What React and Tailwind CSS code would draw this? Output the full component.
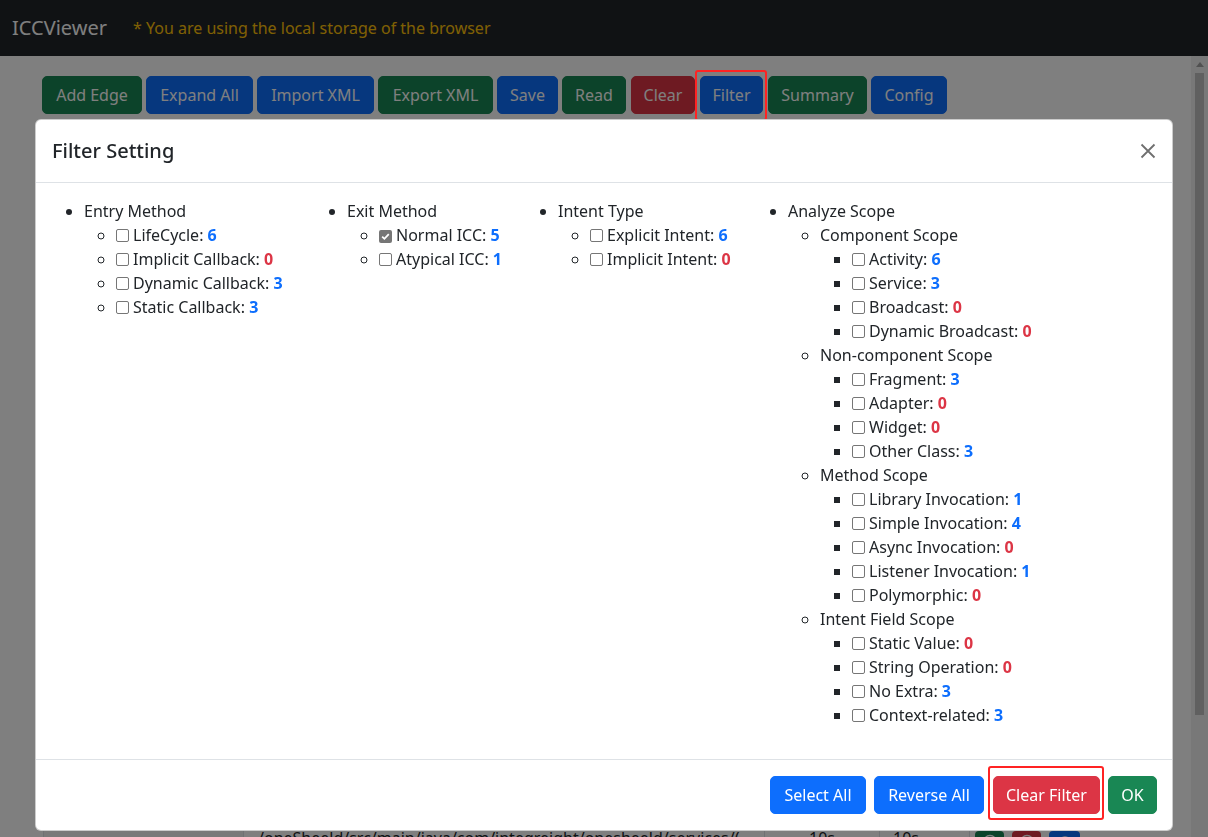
import React from 'react';

const TOOLBAR = [
  { label: 'Add Edge', tone: 'green', w: 'w-[100px]' },
  { label: 'Expand All', tone: 'blue', w: 'w-[107px]' },
  { label: 'Import XML', tone: 'blue', w: 'w-[117px]' },
  { label: 'Export XML', tone: 'green', w: 'w-[115px]' },
  { label: 'Save', tone: 'blue', w: 'w-[61px]' },
  { label: 'Read', tone: 'green', w: 'w-[64px]' },
  { label: 'Clear', tone: 'red', w: 'w-[64px] ml-px' },
  { label: 'Filter', tone: 'blue', w: 'w-[63px] ml-px', marked: true },
  { label: 'Summary', tone: 'green', w: 'w-[99px] ml-px' },
  { label: 'Config', tone: 'blue', w: 'w-[76px]' },
];

const TONE = {
  green: 'bg-[#198754] border-[#198754]',
  blue: 'bg-[#0d6efd] border-[#0d6efd]',
  red: 'bg-[#dc3545] border-[#dc3545]',
};

// filter tree: [label, count, checked]
const COLUMNS = [
  { title: 'Entry Method', width: 'w-[263px]', items: [['LifeCycle', 6], ['Implicit Callback', 0], ['Dynamic Callback', 3], ['Static Callback', 3]] },
  { title: 'Exit Method', width: 'w-[211px]', items: [['Normal ICC', 5, true], ['Atypical ICC', 1]] },
  { title: 'Intent Type', width: 'w-[230px]', items: [['Explicit Intent', 6], ['Implicit Intent', 0]] },
];

const SCOPES = [
  { title: 'Component Scope', items: [['Activity', 6], ['Service', 3], ['Broadcast', 0], ['Dynamic Broadcast', 0]] },
  { title: 'Non-component Scope', items: [['Fragment', 3], ['Adapter', 0], ['Widget', 0], ['Other Class', 3]] },
  { title: 'Method Scope', items: [['Library Invocation', 1], ['Simple Invocation', 4], ['Async Invocation', 0], ['Listener Invocation', 1], ['Polymorphic', 0]] },
  { title: 'Intent Field Scope', items: [['Static Value', 0], ['String Operation', 0], ['No Extra', 3], ['Context-related', 3]] },
];

const Check = ({ checked }) => (
  checked ? (
    <span className="inline-flex items-center justify-center w-[13px] h-[13px] rounded-[2px] bg-[#767676] mr-[4px] align-[-1px]">
      <svg width="11" height="11" viewBox="0 0 11 11"><path d="M2.2 5.6 4.4 7.8 8.8 3.2" fill="none" stroke="#fff" strokeWidth="1.8" /></svg>
    </span>
  ) : (
    <span className="inline-block w-[13px] h-[13px] rounded-[2px] border border-[#767676] bg-white mr-[4px] align-[-1px]" />
  )
);

const Entry = ({ label, count, checked }) => (
  <li>
    <Check checked={checked} />
    {label}: <b className={count > 0 ? 'font-bold text-[#0d6efd]' : 'font-bold text-[#dc3545]'}>{count}</b>
  </li>
);

const Row = ({ path }) => (
  <div className="flex w-[1107px] h-[40px] border-t border-[#dee2e6] text-[#212529]">
    <div className="w-[201px] shrink-0 bg-[#f2f2f2] border-x border-[#dee2e6]" />
    <div className="w-[521px] shrink-0 pl-[14px] pt-2 overflow-hidden whitespace-nowrap border-r border-[#dee2e6]">{path}</div>
    <div className="w-[115px] shrink-0 pt-2 text-center border-r border-[#dee2e6]">10s</div>
    <div className="w-[90px] shrink-0 pt-2 pl-[13px] border-r border-[#dee2e6]">10s</div>
    <div className="w-[180px] shrink-0 pt-[13px] pl-[5px] flex gap-[8px]">
      <span className="w-[29px] h-[26px] rounded-[4px] bg-[#198754] flex justify-center pt-[3px]">
        <svg width="16" height="16" viewBox="0 0 16 16"><circle cx="8" cy="8" r="6.5" fill="none" stroke="#fff" strokeWidth="1.3" /><path d="M8 4.5v7M4.5 8h7" stroke="#fff" strokeWidth="1.3" /></svg>
      </span>
      <span className="w-[29px] h-[26px] rounded-[4px] bg-[#dc3545] flex justify-center pt-[3px]">
        <svg width="16" height="16" viewBox="0 0 16 16"><circle cx="8" cy="8" r="6.5" fill="none" stroke="#fff" strokeWidth="1.3" /><path d="M4.5 8h7" stroke="#fff" strokeWidth="1.3" /></svg>
      </span>
      <span className="w-[31px] h-[26px] rounded-[4px] bg-[#0d6efd] flex justify-center pt-[3px]">
        <svg width="16" height="16" viewBox="0 0 16 16"><path d="M1 8s2.6-5 7-5 7 5 7 5-2.6 5-7 5-7-5-7-5z" fill="none" stroke="#fff" strokeWidth="1.3" /><circle cx="8" cy="8" r="2.4" fill="none" stroke="#fff" strokeWidth="1.3" /></svg>
      </span>
    </div>
  </div>
);

const FooterBtn = ({ w, tone, children }) => (
  <button className={`${w} ${TONE[tone]} my-1 py-[6px] rounded-[5px] border text-white text-center`}>{children}</button>
);

export default function App() {
  const rows = Array.from({ length: 18 });
  return (
    <div className="relative h-[837px] overflow-hidden bg-white text-[16px] leading-6 text-[#212529] font-['Noto_Sans','Open_Sans',sans-serif]">
      <nav className="h-[56px] bg-[#212529] flex items-center px-3">
        <span className="text-[20px] leading-[30px] text-white mr-[26px]">ICCViewer</span>
        <span className="text-[#ffc107]">* You are using the local storage of the browser</span>
      </nav>

      <div className="flex h-[781px]">
        <main className="flex-1 min-w-0 overflow-hidden pt-5 pl-[42px]">
          <div className="flex gap-1">
            {TOOLBAR.map(b => (
              <div key={b.label} className={`relative shrink-0 ${b.w}`}>
                <button className={`${TONE[b.tone]} w-full border text-white text-center py-[6px] rounded-[5px] leading-6`}>{b.label}</button>
                {b.marked && <span className="absolute z-50 -left-[5px] -right-[4px] -top-[6px] -bottom-[7px] border-2 border-[#ff2323] rounded-[3px] pointer-events-none" />}
              </div>
            ))}
          </div>
          <div className="mt-[23px] ml-px">
            {rows.map((_, i) => (
              <Row key={i} path="/oneSheeld/src/main/java/com/integreight/onesheeld/services/(" />
            ))}
          </div>
        </main>
        <div className="w-[17px] shrink-0 bg-[#f1f1f1] flex flex-col items-center">
          <div className="h-[17px] flex items-center justify-center">
            <svg width="8" height="5" viewBox="0 0 8 5"><path d="M4 0 8 5H0z" fill="#a3a3a3" /></svg>
          </div>
          <div className="w-[9px] h-[642px] bg-[#c1c1c1]" />
        </div>
      </div>

      <div className="fixed inset-0 z-40 bg-black/50" />

      <div className="fixed inset-0 z-50 flex justify-center pt-[119px]">
        <div className="w-[1138px] h-fit bg-white rounded-[6px] border border-black/20 flex flex-col">
          <div className="flex items-center justify-between px-4 py-4 border-b border-[#dee2e6]">
            <h5 className="text-[20px] leading-[30px] font-medium">Filter Setting</h5>
            <svg width="16" height="16" viewBox="0 0 16 16">
              <path d="M1.5 1.5l13 13M14.5 1.5l-13 13" stroke="#6f6f6f" strokeWidth="1.8" />
            </svg>
          </div>

          <div className="p-4 flex">
            {COLUMNS.map(col => (
              <ul key={col.title} className={`${col.width} shrink-0 list-disc pl-8 mb-4`}>
                <li>
                  {col.title}
                  <ul className="list-[circle] pl-8">
                    {col.items.map(([label, count, checked]) => (
                      <Entry key={label} label={label} count={count} checked={checked} />
                    ))}
                  </ul>
                </li>
              </ul>
            ))}
            <ul className="list-disc pl-8 mb-4">
              <li>
                Analyze Scope
                <ul className="list-[circle] pl-8">
                  {SCOPES.map(s => (
                    <li key={s.title}>
                      {s.title}
                      <ul className="list-[square] pl-8">
                        {s.items.map(([label, count]) => (
                          <Entry key={label} label={label} count={count} />
                        ))}
                      </ul>
                    </li>
                  ))}
                </ul>
              </li>
            </ul>
          </div>

          <div className="border-t border-[#dee2e6] pt-3 pb-3 pr-[15px] flex justify-end">
            <FooterBtn w="w-[96px]" tone="blue">Select All</FooterBtn>
            <div className="w-2" />
            <FooterBtn w="w-[110px]" tone="blue">Reverse All</FooterBtn>
            <div className="w-[9px]" />
            <div className="relative">
              <FooterBtn w="w-[107px]" tone="red">Clear Filter</FooterBtn>
              <span className="absolute -left-[5px] -right-[4px] -top-[6px] -bottom-[2px] border-2 border-[#ff2323] rounded-[3px] pointer-events-none" />
            </div>
            <div className="w-2" />
            <FooterBtn w="w-[49px]" tone="green">OK</FooterBtn>
          </div>
        </div>
      </div>
    </div>
  );
}
